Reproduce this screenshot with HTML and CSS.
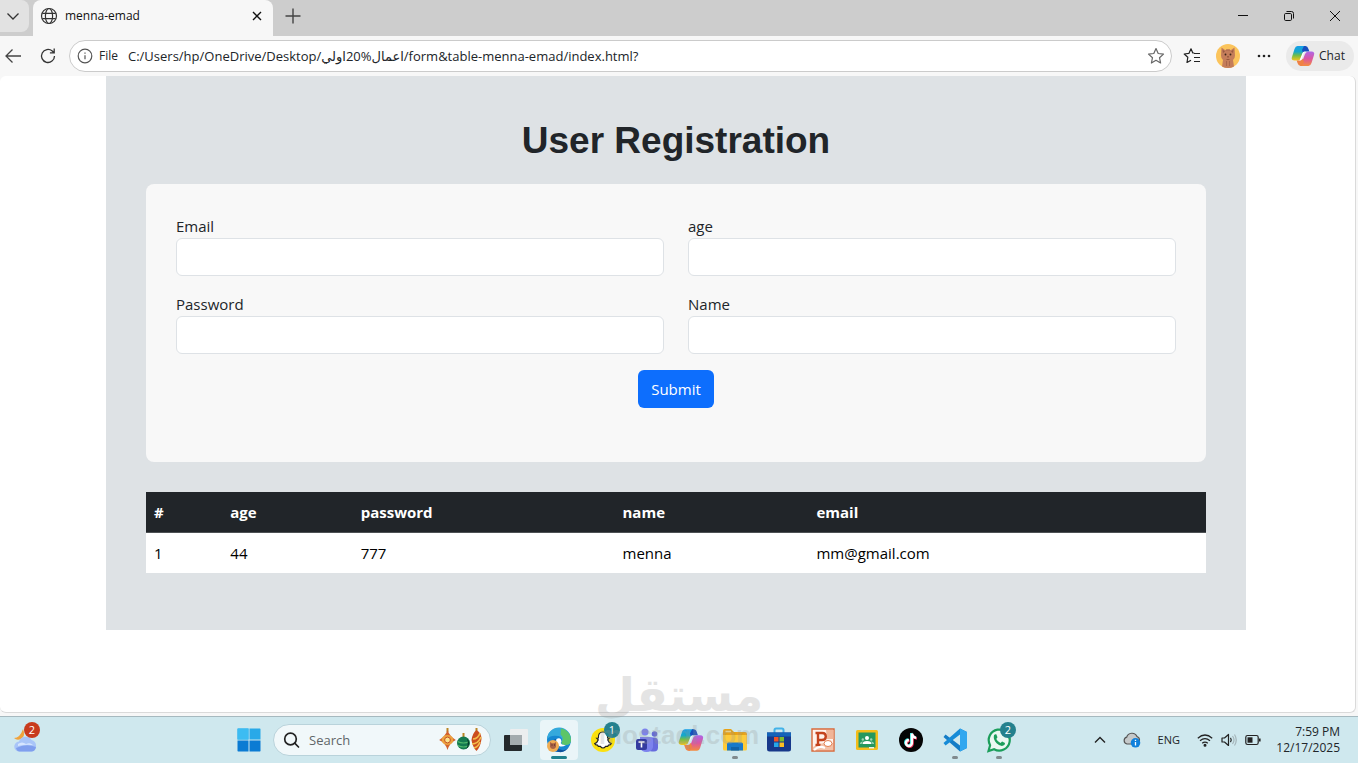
FILE: index.html
```html
<!DOCTYPE html>
<html lang="en">
<head>
  <meta charset="UTF-8">
  <meta name="viewport" content="width=device-width, initial-scale=1.0">
  <title>menna-emad</title>
  <link rel="stylesheet" href="styles.css">
</head>
<body>

  <!-- Tab strip -->
  <header class="tab-strip">
    <button class="tab-menu" aria-label="Tab actions">
      <svg width="14" height="14" viewBox="0 0 14 14" fill="none" stroke="#333" stroke-width="1.3"><path d="M1.500 4.500 7 10l5.500-5.500"/></svg>
    </button>
    <div class="tab">
      <svg width="18" height="18" viewBox="0 0 18 18" fill="none" stroke="#333" stroke-width="1.200"><circle cx="9" cy="9" r="7.500"/><ellipse cx="9" cy="9" rx="3.600" ry="7.500"/><path d="M2.300 6.300h13.400M2.300 11.700h13.400"/></svg>
      <span class="tab-title">menna-emad</span>
      <button class="tab-close" aria-label="Close tab">
        <svg width="12" height="12" viewBox="0 0 12 12" stroke="#111" stroke-width="1.400"><path d="M2 2l8 8M10 2l-8 8"/></svg>
      </button>
    </div>
    <button class="new-tab" aria-label="New tab">
      <svg width="16" height="16" viewBox="0 0 16 16" stroke="#444" stroke-width="1.400"><path d="M8 .5v15M.5 8h15"/></svg>
    </button>
    <div class="window-controls">
      <button aria-label="Minimize"><svg width="12" height="12" viewBox="0 0 12 12" stroke="#111"><path d="M1 5.500h10"/></svg></button>
      <button aria-label="Restore"><svg width="12" height="12" viewBox="0 0 12 12" fill="none" stroke="#111"><rect x="1.500" y="3.500" width="7" height="7" rx="1.200"/><path d="M3.500 1.500h5q2 0 2 2v5"/></svg></button>
      <button aria-label="Close"><svg width="12" height="12" viewBox="0 0 12 12" stroke="#111"><path d="M1 1l10 10M11 1L1 11"/></svg></button>
    </div>
  </header>

  <!-- Address bar -->
  <nav class="toolbar">
    <button class="tool back" aria-label="Back">
      <svg width="18" height="18" viewBox="0 0 18 18" fill="none" stroke="#444" stroke-width="1.300"><path d="M17 9H2M8.500 2.500 2 9l6.500 6.500"/></svg>
    </button>
    <button class="tool" aria-label="Refresh">
      <svg width="18" height="18" viewBox="0 0 18 18" fill="none" stroke="#333" stroke-width="1.300"><path d="M15.500 9A6.500 6.500 0 1 1 13.300 4.100L15 5.700M15.200 1.500v4.300h-4.300"/></svg>
    </button>
    <div class="address">
      <svg width="16" height="16" viewBox="0 0 16 16" fill="none" stroke="#555" stroke-width="1.200"><circle cx="8" cy="8" r="6.800"/><path d="M8 7.200v4M8 4.500v1.300"/></svg>
      <label for="url">File</label>
      <input type="text" id="url" value="C:/Users/hp/OneDrive/Desktop/اعمال%20اولي/form&amp;table-menna-emad/index.html?">
      <button class="fav" aria-label="Add to favorites">
        <svg width="18" height="18" viewBox="0 0 18 18" fill="none" stroke="#666" stroke-width="1.200" stroke-linejoin="round"><path d="M9 1.600l2.200 4.900 5.300.6-4 3.600 1.100 5.300L9 13.300 4.400 16l1.100-5.300-4-3.600 5.300-.6z"/></svg>
      </button>
    </div>
    <button class="tool" aria-label="Favorites">
      <svg width="18" height="18" viewBox="0 0 18 18" fill="none" stroke="#222" stroke-width="1.200" stroke-linejoin="round"><path d="M11.300 6H9.800L8 1.800 5.900 6.400 1.200 7l3.600 3.300L4 15.500l4-2.300M11 6.500h6M11 10.500h6M11 14.500h6"/></svg>
    </button>
    <button class="tool" aria-label="Profile">
      <svg width="24" height="24" viewBox="0 0 24 24"><circle cx="12" cy="12" r="12" fill="#fbc45c"/><path d="M5.500 3.500 9 6q3-1 6 0l3.500-2.500.5 8q0 3-2 4.500l1 6.500q-6 3-12 0l1-6.500q-2-1.500-2-4.500z" fill="#c47d5a"/><path d="M6.500 5.500 9 7.500l-2 1.500zM17.500 5.500 15 7.500 17 9z" fill="#9b5b43"/><circle cx="9.500" cy="10.500" r=".9" fill="#3c251b"/><circle cx="14.500" cy="10.500" r=".9" fill="#3c251b"/><path d="M11 12.500h2l-1 1.300zM10 15q2 1.200 4 0" fill="#67331f"/><path d="M10.500 17v5M13.500 17v5M11 5v2M13 5v2" stroke="#a9664b"/></svg>
    </button>
    <button class="tool" aria-label="Settings and more">
      <svg width="16" height="16" viewBox="0 0 16 16" fill="#222"><circle cx="3" cy="8" r="1.300"/><circle cx="8" cy="8" r="1.300"/><circle cx="13" cy="8" r="1.300"/></svg>
    </button>
    <button class="chat">
      <svg width="24" height="22" viewBox="0 0 24 22">
        <defs>
          <linearGradient id="cpBlue" x1="0" y1="0" x2="0" y2="1"><stop offset="0" stop-color="#159ee8"/><stop offset=".4" stop-color="#17a8c9"/><stop offset=".65" stop-color="#72bd48"/><stop offset="1" stop-color="#f5c51d"/></linearGradient>
          <linearGradient id="cpPink" x1="0" y1="0" x2="0" y2="1"><stop offset="0" stop-color="#ad66e9"/><stop offset=".5" stop-color="#db55a1"/><stop offset="1" stop-color="#f58c3c"/></linearGradient>
        </defs>
        <path d="M6.500 1h8l-4.500 12q-1 2.500-3.500 2.500H3.500Q-.2 15.500 1 12l2.500-8Q4.500 1 6.500 1z" fill="url(#cpBlue)"/>
        <path d="M13 1h1.500q2 0 3 3l.8 2.500H15q-2 0-2.800 2L11 5z" fill="#174fbd"/>
        <path d="M17.500 21h-8L14 9q1-2.500 3.500-2.500h3Q24 6.500 23 10l-2.500 8q-1 3-3 3z" fill="url(#cpPink)"/>
        <path d="M11 21H9.500q-2 0-3-3l-.8-2.500H9q2 0 2.800-2L13 17z" fill="#ef8144"/>
        <path d="M13.500 6.500h1.500q-2 .5-2.800 3L10.500 14q-.5 1.500-2 1.500l3-7.500q.5-1.500 2-1.500z" fill="#fff"/>
      </svg>
      Chat
    </button>
  </nav>

  <!-- Page -->
  <main class="page">
    <div class="container">
      <h1>User Registration</h1>

      <form class="card" onsubmit="return false">
        <div class="fields">
          <div class="field">
            <label for="email">Email</label>
            <input type="email" id="email">
          </div>
          <div class="field">
            <label for="age">age</label>
            <input type="number" id="age">
          </div>
          <div class="field">
            <label for="password">Password</label>
            <input type="password" id="password">
          </div>
          <div class="field">
            <label for="name">Name</label>
            <input type="text" id="name">
          </div>
        </div>
        <button type="submit" class="submit">Submit</button>
      </form>

      <table>
        <colgroup>
          <col class="col-id"><col class="col-age"><col class="col-password"><col class="col-name"><col>
        </colgroup>
        <thead>
          <tr><th>#</th><th>age</th><th>password</th><th>name</th><th>email</th></tr>
        </thead>
        <tbody>
          <tr><td>1</td><td>44</td><td>777</td><td>menna</td><td>mm@gmail.com</td></tr>
        </tbody>
      </table>
    </div>
  </main>

  <!-- Taskbar -->
  <footer class="taskbar">
    <div class="widgets">
      <button class="app" aria-label="Weather">
        <svg width="26" height="26" viewBox="0 0 26 26"><path d="M10 2q3 7-2 10-4 2-7-1 6 0 9-9z" fill="#f0a33c"/><path d="M6.500 24.500a5 5 0 0 1-.5-10 7 7 0 0 1 12.500-1.500 6 6 0 0 1 .5 11.500z" fill="#a9c5f8"/><path d="M3 21q10-5 20-1-1 4.500-4.500 4.500h-12Q4 24.500 3 21z" fill="#809fee"/><path d="M5 17q4-3 8 0 4-2 7 1-7-1-15 1z" fill="#d6e5ff"/></svg>
        <span class="badge red">2</span>
      </button>
    </div>

    <button class="app" aria-label="Start">
      <svg width="24" height="24" viewBox="0 0 24 24"><path d="M1 .5h10.500v11H.5V1zM12.500.5H23l.5.500v10.500h-11z" fill="#29a9e8"/><path d="M.5 12.500h11v11H1l-.5-.5zM12.500 12.500h11V23l-.5.500H12.500z" fill="#0b7bd3"/><path d="M.5.500h11v11h-11z" fill="#3cbcf2"/></svg>
    </button>

    <div class="search">
      <svg width="18" height="18" viewBox="0 0 18 18" fill="none" stroke="#222" stroke-width="1.700"><circle cx="7.500" cy="8" r="5.800"/><path d="M11.700 12.200 15.500 16" stroke-linecap="round"/></svg>
      <input type="text" placeholder="Search" aria-label="Search">
      <svg width="44" height="26" viewBox="0 0 44 26">
        <path d="M8.500 1v4M24.500 6v4M37.500 1v4" stroke="#b98524" stroke-width="2"/>
        <path d="M8.500 3q2 6 8.300 10-6.300 3-8.300 10-2-7-8.300-10Q6.500 9 8.500 3z" fill="#d3622d"/>
        <ellipse cx="8.500" cy="13" rx="5.800" ry="5" fill="#eca23e"/><circle cx="8.500" cy="13" r="2.900" fill="#fbe28e" stroke="#c44f23"/>
        <circle cx="24.500" cy="16" r="6.500" fill="#147a50"/><path d="M18.500 14.500q6 3 12 0M18.800 18.500q6 3 11.400 0" fill="none" stroke="#51ba6d" stroke-width="1.200"/><path d="M28 11.500a6.500 6.500 0 0 1-1 10.500q3-4 1-10.500z" fill="#073a2b"/>
        <path d="M37.500 3q5 3 5 9-1 8-5 12-4-4-5-11 1-7 5-10z" fill="#cb4e1f"/><path d="M34 12q5 0 7-6M33 17q6 0 9-7M35 21q4-1 6-6" fill="none" stroke="#f3bd4c" stroke-width="1.600"/>
      </svg>
    </div>

    <button class="app" aria-label="Task view">
      <svg width="26" height="26" viewBox="0 0 26 26"><rect x="2" y="8" width="18" height="16" rx="1" fill="#24292c"/><rect x="8" y="2" width="18" height="16" rx="1" fill="#eceeef"/><path d="M8 8h12v10H8z" fill="#a4abae"/></svg>
    </button>
    <button class="app active" aria-label="Edge">
      <svg width="26" height="26" viewBox="0 0 26 26"><circle cx="13" cy="13" r="12" fill="#1687d1"/><path d="M1 12A12 12 0 0 1 25 13q0 5-5.500 5-4 0-4-2.500 2-5-3-6.500Q5 7.500 1 12z" fill="#35a9dc"/><path d="M15 1.200A12 12 0 0 1 25 13q0 5-5.500 5-4 0-4-2.500 3-5-1-8z" fill="#5cc568"/><path d="M10 12q-2 9 6 11 4 1 7-3-4 6-10 5-8-1-8-8 1-4 5-5z" fill="#12509c"/><path d="M10.500 12q3-1.500 4.500.5 1 2-.3 3.500.8 2.500 5.300 2-4 2.500-7 1-4-2-2.500-7z" fill="#fff"/><circle cx="7" cy="19" r="6" fill="#f0ad54"/><path d="M4 15l2 1.200h2l2-1.200v5q-1 2-3 2t-3-2z" fill="#a96245"/><path d="M5.500 18h1M8 18h1" stroke="#4b2418"/></svg>
    </button>
    <button class="app" aria-label="Snapchat">
      <svg width="26" height="26" viewBox="0 0 26 26"><circle cx="13" cy="13" r="12" fill="#fbe00e"/><path d="M13 5q5 0 4.600 6l1.700.2-1.600 1.600q1 3 3.600 3.800-.5 1.500-2.800 1.600l-.8 1.200-2-.1q-1.300 1.700-2.700 1.700t-2.700-1.700l-2 .1-.8-1.200q-2.300-.1-2.800-1.600 2.600-.8 3.600-3.800l-1.600-1.600 1.700-.2Q8 5 13 5z" fill="#fff" stroke="#222" stroke-width="1.200"/></svg>
      <span class="badge">1</span>
    </button>
    <button class="app" aria-label="Teams">
      <svg width="26" height="26" viewBox="0 0 26 26"><circle cx="11" cy="5" r="3.500" fill="#7d83ec"/><circle cx="20.500" cy="7" r="2.800" fill="#656bd7"/><rect x="14" y="10.500" width="10" height="14" rx="4" fill="#666bdd"/><path d="M6 10h10q3 0 3 3v7q-1 5-6.500 5T6 20z" fill="#7c82ed"/><rect x="2" y="12" width="11" height="11" rx="2" fill="#353b9f"/><path d="M4.500 15h6M7.500 15v5.500" stroke="#fff" stroke-width="1.600"/></svg>
    </button>
    <button class="app" aria-label="Copilot">
      <svg width="26" height="24" viewBox="0 0 24 22"><path d="M6.500 1h8l-4.500 12q-1 2.500-3.500 2.500H3.500Q-.2 15.500 1 12l2.500-8Q4.500 1 6.500 1z" fill="url(#cpBlue)"/><path d="M13 1h1.500q2 0 3 3l.8 2.500H15q-2 0-2.800 2L11 5z" fill="#174fbd"/><path d="M17.500 21h-8L14 9q1-2.500 3.500-2.500h3Q24 6.500 23 10l-2.500 8q-1 3-3 3z" fill="url(#cpPink)"/><path d="M11 21H9.500q-2 0-3-3l-.8-2.500H9q2 0 2.800-2L13 17z" fill="#ef8144"/><path d="M13.500 6.500h1.500q-2 .5-2.800 3L10.500 14q-.5 1.500-2 1.500l3-7.500q.5-1.500 2-1.500z" fill="#e8f4f7"/></svg>
    </button>
    <button class="app open" aria-label="File Explorer">
      <svg width="26" height="26" viewBox="0 0 26 26"><path d="M1 4q0-2 2-2h6l3 3h11q2 0 2 2v15H1z" fill="#e8a317"/><path d="M3.500 4.500H9" stroke="#ffe08b" stroke-width="1.500"/><path d="M1 8h24v14q0 1.500-1.500 1.500h-21Q1 23.500 1 22z" fill="#fdcb3a"/><path d="M5 17q0-1.500 1.500-1.500h13q1.500 0 1.500 1.500v6.500H5z" fill="#1879ca"/><path d="M9 20h8v3.500H9z" fill="#1263a9"/></svg>
    </button>
    <button class="app" aria-label="Microsoft Store">
      <svg width="26" height="26" viewBox="0 0 26 26"><path d="M8.500 6V3q0-1.500 1.500-1.500h6q1.500 0 1.500 1.500v3" fill="none" stroke="#42b2e8" stroke-width="2"/><path d="M1 5.500h24V22q0 2.500-2.500 2.500h-19Q1 24.500 1 22z" fill="#17388a"/><path d="M1 5.500h24v4H1z" fill="#1463b8"/><path d="M8 10h4.500v4.500H8z" fill="#f05425"/><path d="M13.500 10H18v4.500h-4.500z" fill="#80bb2c"/><path d="M8 15.500h4.500V20H8z" fill="#27a8e8"/><path d="M13.500 15.500H18V20h-4.500z" fill="#fdbd22"/></svg>
    </button>
    <button class="app" aria-label="PowerPoint">
      <svg width="26" height="26" viewBox="0 0 26 26"><path d="M2 2h22v22H2z" fill="#fff3ec" stroke="#d96a3b" stroke-width="1.400"/><path d="M16 3h7.500v9H17z" fill="#f0b598"/><path d="M3 20q8-5 20-4v7H3z" fill="#f3c1a7"/><path d="M8 18V6h4.300q3.500 0 3.500 3.500T12 13H8M5.500 18h5M5.500 6H8" fill="none" stroke="#c4431d" stroke-width="2.400"/><ellipse cx="18" cy="16.500" rx="4" ry="3" fill="#fff" stroke="#e38052"/><path d="M4 23q5-5 11-2" fill="none" stroke="#fff" stroke-width="2"/></svg>
    </button>
    <button class="app" aria-label="Classroom">
      <svg width="26" height="26" viewBox="0 0 26 26"><rect x="2" y="3" width="22" height="20" rx="1.500" fill="#f4bd1b"/><path d="M4.500 5.500h17v15h-17z" fill="#25985e"/><circle cx="13" cy="11" r="2" fill="#fff"/><circle cx="8.800" cy="12.500" r="1.200" fill="#9dd4b4"/><circle cx="17.200" cy="12.500" r="1.200" fill="#9dd4b4"/><path d="M8.500 17q0-3 4.500-3t4.500 3z" fill="#fff"/><path d="M6 17q0-2.500 3-2.500L7.500 17zM20 17q0-2.500-3-2.500l1.500 2.500z" fill="#9dd4b4"/><path d="M15 20h5v1.500h-5z" fill="#e8f2ec"/></svg>
    </button>
    <button class="app" aria-label="TikTok">
      <svg width="26" height="26" viewBox="0 0 26 26"><circle cx="13" cy="13" r="12" fill="#050505"/><g fill="none" stroke-width="2.400"><path d="M13.200 6v9.500a3 3 0 1 1-3-3M13.200 6q.5 4 4.300 4.300" stroke="#28e5df"/><path d="M14.600 7.200v9.500a3 3 0 1 1-3-3M14.600 7.200q.5 4 4.300 4.300" stroke="#f2355b"/><path d="M13.900 6.500V16a3 3 0 1 1-3-3M13.900 6.500q.5 4 4.300 4.300" stroke="#fff"/></g></svg>
    </button>
    <button class="app open" aria-label="Visual Studio Code">
      <svg width="26" height="26" viewBox="0 0 26 26"><path d="M18 1.500 25 5v16l-7 3.500L1.500 10l2-2.500L18 18.500z" fill="#147cc6"/><path d="M18 1.500v6L3.500 18.500l-2-2.500z" fill="#168bd7"/><path d="M18 1.500 25 5v16l-7 3.500z" fill="#32a7ef"/></svg>
    </button>
    <button class="app open" aria-label="WhatsApp">
      <svg width="26" height="26" viewBox="0 0 26 26"><path d="M2.500 24l1.600-5.800a10.500 10.500 0 1 1 4 4z" fill="#eaf8f2" stroke="#1b9e5b" stroke-width="2.200"/><path d="M8 8.300q1-1.600 2.300-1l1.200 3-1.200 1.700q1.300 2.800 4.200 4l1.600-1.500 2.900 1.400q.3 1.800-1.600 2.700-3 1.200-6.800-2.400T8 8.300z" fill="#1b9e5b"/></svg>
      <span class="badge">2</span>
    </button>

    <div class="tray">
      <button aria-label="Show hidden icons"><svg width="12" height="12" viewBox="0 0 12 12" fill="none" stroke="#222" stroke-width="1.400"><path d="M1 8.500l5-5 5 5"/></svg></button>
      <button class="cloud" aria-label="OneDrive"><svg width="18" height="16" viewBox="0 0 18 16"><path d="M4 12a3.500 3.500 0 0 1-.3-6.800A5.500 5.500 0 0 1 14 4.500q2.500 1 2.500 3.500T14 12z" fill="#c5c9ca" stroke="#555" stroke-width="1.200"/><circle cx="12.500" cy="10.800" r="4.800" fill="#1081dc"/><path d="M12.500 10v3.500M12.500 7.800v1.300" stroke="#fff" stroke-width="1.300"/></svg></button>
      <span class="lang">ENG</span>
      <button class="status" aria-label="Network, volume, battery">
        <svg width="16" height="14" viewBox="0 0 16 14" fill="none" stroke="#222" stroke-width="1.200"><path d="M.8 5.200q7.200-6.400 14.400 0M3 7.800q5-4.400 10 0M5.200 10.300q2.800-2.400 5.600 0"/><circle cx="8" cy="12.200" r=".9" fill="#222"/></svg>
        <svg width="16" height="14" viewBox="0 0 16 14" fill="none" stroke="#222" stroke-width="1.200"><path d="M1 5h2.500L7.500 1.500v11L3.500 9H1z" stroke-linejoin="round"/><path d="M9.500 4.800q1.500 2.200 0 4.400"/><path d="M11.500 3q3 4 0 8M13.500 1.500q3.500 5.500 0 11" stroke="#a5b5ba"/></svg>
        <svg width="16" height="14" viewBox="0 0 16 14" fill="none" stroke="#222" stroke-width="1.200"><rect x=".8" y="2.500" width="12.400" height="9" rx="1.800"/><path d="M2.500 4.300h5v5.400h-5z" fill="#222" stroke="none"/><path d="M14.800 5.500v3" stroke-width="1.600"/></svg>
      </button>
      <div class="clock"><span>7:59 PM</span><span>12/17/2025</span></div>
    </div>
  </footer>

  <div class="watermark"><span lang="ar">مستقل</span><span class="domain">mostaql.com</span></div>

</body>
</html>
```
FILE: styles.css
```css
* { box-sizing: border-box; }

body {
  margin: 0;
  min-height: 100vh;
  display: flex;
  flex-direction: column;
  background: #f7f7f7;
  color: #212529;
  font-family: "Open Sans", "DejaVu Sans", sans-serif;
  font-size: 15px;
  line-height: 24px;
}

button, input { font: inherit; color: inherit; }
button { display: inline-flex; align-items: center; justify-content: center; padding: 0; border: 0; background: none; }
svg { display: block; flex-shrink: 0; }

/* Tab strip */
.tab-strip { display: flex; height: 36px; background: #cdcdcd; font-size: 12px; }
.tab-menu { width: 29px; height: 32px; padding-right: 4px; border-radius: 0 8px 8px 0; background: #e2e2e2; }
.tab { display: flex; align-items: center; gap: 7px; width: 240px; height: 36px; margin-left: 4px; padding: 0 10px 4px 7px; border-radius: 8px 8px 0 0; background: #f7f7f7; color: #111; }
.tab-title { flex: 1; }
.new-tab { width: 40px; height: 32px; }
.window-controls { display: flex; margin-left: auto; }
.window-controls button { width: 46px; height: 32px; }

/* Address bar */
.toolbar { display: flex; align-items: center; height: 40px; padding-right: 4px; }
.tool { width: 36px; height: 32px; }
.back { width: 30px; padding-right: 4px; }
.address { flex: 1; display: flex; align-items: center; height: 32px; margin: 0 2px 0 3px; padding: 0 6px 0 7px; border: 1px solid #cbcbcb; border-radius: 16px; background: #fff; }
.address label { margin: 0 10px 0 6px; font-size: 12px; }
.address input { flex: 1; min-width: 0; padding: 0; border: 0; outline: 0; background: none; font-size: 13px; }
.chat { gap: 4px; height: 30px; width: 68px; margin-left: 4px; padding-right: 4px; border-radius: 16px; background: #eaeaea; font-size: 12px; }

/* Page */
.page { flex: 1; margin: 0 2px 3px 0; padding-right: 3px; border: solid #dadada; border-width: 0 1px 1px 0; border-radius: 6px; background: #fff; }
.container { max-width: 1140px; margin: 0 auto; padding: 40px 40px 57px; background: #dee2e5; }
h1 { margin: 0 0 18px; font: bold 37px/50px "Liberation Sans", Arial, sans-serif; text-align: center; }

.card { padding: 30px 30px 54px; border-radius: 8px; background: #f8f8f8; }
.fields { display: grid; grid-template-columns: 1fr 1fr; gap: 16px 24px; }
.field label { display: block; }
.field input { display: block; width: 100%; height: 38px; padding: 6px 12px; border: 1px solid #dee2e6; border-radius: 6px; background: #fff; }
.submit { display: block; height: 38px; margin: 16px auto 0; padding: 0 13px; border-radius: 6px; background: #0d6efd; color: #fff; }

table { width: 100%; margin-top: 30px; border-collapse: collapse; table-layout: fixed; background: #fff; color: #000; }
th, td { padding: 8px; text-align: left; }
th { background: #212529; border-bottom: 1px solid #4d5154; color: #fff; }
.col-id { width: 7.200%; }
.col-age { width: 12.300%; }
.col-password { width: 24.700%; }
.col-name { width: 18.300%; }

/* Taskbar */
.taskbar { display: flex; align-items: center; height: 47px; border-top: 1px solid #a6b9bf; background: #cfe8ee; }
.widgets { width: 227px; padding-left: 4px; }
.app { position: relative; width: 44px; height: 40px; }
.app.active::before { content: ""; position: absolute; inset: 0 3px; border-radius: 4px; background: #eaf5f8; }
.app.active svg { position: relative; }
.app.active::after, .app.open::after { content: ""; position: absolute; bottom: 1px; width: 6px; height: 3px; border-radius: 2px; background: #808a8d; }
.app.active::after { width: 16px; background: #21808d; }
.badge { position: absolute; top: 2px; left: 23px; width: 16px; height: 16px; border-radius: 8px; background: #24808d; color: #fff; font-size: 11px; line-height: 16px; }
.badge.red { left: 20px; background: #c83b1d; }
.search { display: flex; align-items: center; gap: 8px; width: 218px; height: 32px; margin: 0 2px; padding: 0 7px 0 9px; border: 1px solid #b9d3db; border-radius: 16px; background: #f1f8fa; }
.search input { flex: 1; min-width: 0; padding: 0; border: 0; outline: 0; background: none; font-size: 13px; }
.search input::placeholder { color: #606668; opacity: 1; }

.tray { display: flex; align-items: center; margin-left: auto; padding-right: 18px; font-size: 12px; line-height: 16px; }
.tray .cloud { margin-left: 17px; }
.lang { margin: 0 17px; font-size: 11px; }
.status { gap: 8px; }
.clock { display: flex; flex-direction: column; width: 79px; text-align: right; }

/* Watermark over the page and the taskbar */
.watermark { position: absolute; left: 50%; bottom: 12px; transform: translateX(-50%); display: flex; flex-direction: column; align-items: center; color: #969696; opacity: 0.25; pointer-events: none; }
.watermark span { font: bold 46px/48px "DejaVu Sans", sans-serif; }
.watermark .domain { font: bold 26px/32px "Liberation Sans", Arial, sans-serif; }
```
